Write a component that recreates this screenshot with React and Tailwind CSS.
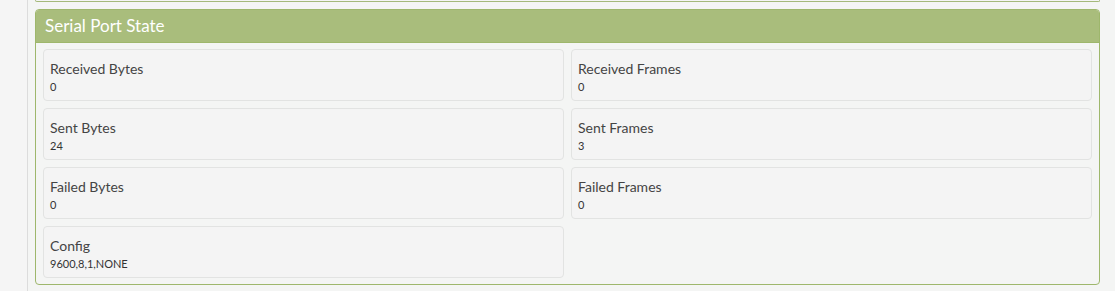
const stats = [
  ['Received Bytes', '0'],
  ['Received Frames', '0'],
  ['Sent Bytes', '24'],
  ['Sent Frames', '3'],
  ['Failed Bytes', '0'],
  ['Failed Frames', '0'],
  ['Config', '9600,8,1,NONE'],
]

function StatCard({ label, value }) {
  return (
    <div className="h-[52px] rounded-[4px] border border-[#e2e3e2] bg-[#f4f4f4] px-[6px] pt-[10px]">
      <div className="text-[14px] leading-[18px] text-[#444]">{label}</div>
      <div className="mt-[2px] text-[11px] leading-[14px] text-[#333]">{value}</div>
    </div>
  )
}

export default function App() {
  return (
    <div
      className="flex h-[291px] w-[1115px] overflow-hidden bg-[#f4f5f4]"
      style={{ fontFamily: '"Segoe UI", Lato, "Noto Sans", sans-serif' }}
    >
      <div className="w-[28px] shrink-0 border-r border-[#dcdcdc] bg-[#f5f5f5]" />
      <div className="w-[1072px] shrink-0 pl-[7px]">
        <div className="h-[2px] rounded-b-[3px] border-b border-x border-[#a4b97a]" />
        <section className="mt-[7px] rounded-[4px] border border-[#9eb76c] bg-[#f4f5f4]">
          <div className="h-[33px] rounded-t-[3px] border-b border-[#9eb76c] bg-[#a9bd7c] px-[9px] pt-[4px] text-[17px] leading-[23px] text-white">
            Serial Port State
          </div>
          <div className="grid grid-cols-2 gap-[7px] px-[7px] pt-[6px] pb-[6px]">
            {stats.map(([label, value]) => (
              <StatCard key={label} label={label} value={value} />
            ))}
          </div>
        </section>
      </div>
    </div>
  )
}
